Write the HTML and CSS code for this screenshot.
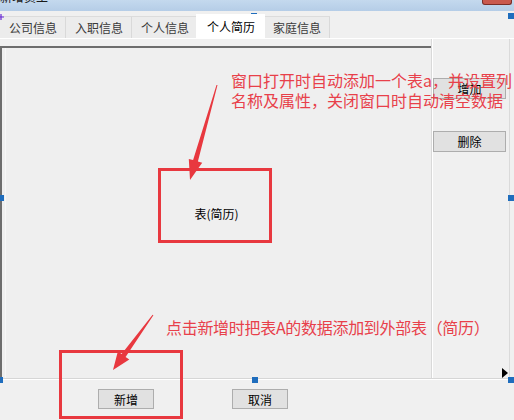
FILE: index.html
```html
<!DOCTYPE html>
<html lang="zh-CN">

<head>
    <meta charset="UTF-8">
    <title>新增员工</title>
    <link rel="stylesheet" href="styles.css">
</head>

<body>
    <div class="window">
        <div class="titlebar">
            <span class="title">新增员工</span>
            <span class="close"></span>
        </div>

        <div class="tabs">
            <div class="tab">公司信息</div>
            <div class="tab">入职信息</div>
            <div class="tab">个人信息</div>
            <div class="tab active">个人简历</div>
            <div class="tab">家庭信息</div>
        </div>

        <div class="panel">
            <div class="grid">
                <span class="grid-label">表(简历)</span>
            </div>
            <div class="side">
                <button class="btn side-btn">增加</button>
                <button class="btn side-btn">删除</button>
            </div>
        </div>

        <div class="footer">
            <button class="btn">新增</button>
            <button class="btn">取消</button>
        </div>

        <!-- designer marks -->
        <svg class="cross" width="6" height="8" viewBox="0 0 6 8">
            <path d="M0 4H5M2 1V7" stroke="#6a2bd6" stroke-width="1.2" fill="none" />
        </svg>
        <span class="handle h-top-mid"></span>
        <span class="handle h-top-right"></span>
        <span class="handle h-mid-left"></span>
        <span class="handle h-mid-right"></span>
        <span class="handle h-bot-left"></span>
        <span class="handle h-bot-mid"></span>
        <span class="handle h-bot-right"></span>
        <span class="pointer"></span>

        <!-- red annotations -->
        <div class="note note-top">窗口打开时自动添加一个表a，并设置列<br>名称及属性，关闭窗口时自动清空数据</div>
        <div class="note note-bottom">点击新增时把表A的数据添加到外部表（简历）</div>
        <div class="mark mark-grid"></div>
        <div class="mark mark-add"></div>
        <svg class="arrows" width="514" height="420" viewBox="0 0 514 420">
            <polygon fill="#e8383f"
                points="216.5,84.9 193.1,160.1 188.8,158.9 190,180 202.2,162.7 197.9,161.5 217.5,85.1" />
            <polygon fill="#e8383f"
                points="152.6,314.7 121.6,353.9 117.9,351.3 113,370 129.3,359.5 125.6,356.9 153.4,315.3" />
        </svg>
    </div>
</body>

</html>
```

FILE: styles.css
```css
* {
    box-sizing: border-box;
    margin: 0;
    padding: 0;
}

body {
    background: #f0f0f0;
    font-family: "Noto Sans CJK SC", "Liberation Sans", sans-serif;
    overflow: hidden;
}

.window {
    position: relative;
    width: 514px;
    height: 420px;
    overflow: hidden;
}

.titlebar {
    display: flex;
    height: 11px;
    background: linear-gradient(to bottom, #c4d9ee, #b5cde7);
    overflow: hidden;
}

.title {
    display: block;
    margin-top: -10px;
    font-size: 12px;
    line-height: 14px;
    color: #1a1a1a;
}

.close {
    display: block;
    width: 30px;
    height: 5px;
    margin-left: auto;
    margin-right: 2px;
    background: #c9594e;
    border: 1px solid #7a2e28;
    border-top: none;
    border-radius: 0 0 3px 3px;
}

/* tabs */

.tabs {
    display: flex;
    align-items: flex-end;
    margin-top: 3px;
    height: 24px;
}

.tab {
    height: 22px;
    padding: 0 8px 0 9px;
    border-right: 1px solid #d9d9d9;
    border-top: 1px solid #dcdcdc;
    background: #ececec;
    font-size: 12px;
    line-height: 21px;
    color: #3a3a3a;
}

.tab.active {
    height: 24px;
    margin: 0 -1px 0 -2px;
    padding: 0 10px 0 11px;
    background: #fff;
    border: none;
    color: #000;
    line-height: 25px;
    position: relative;
    z-index: 1;
}

/* tab page */

.panel {
    display: flex;
    height: 341px;
    border-top: 1px solid #fff;
    border-bottom: 1px solid #d6d6d6;
}

.grid {
    display: flex;
    align-items: center;
    justify-content: center;
    width: 431px;
    height: 332px;
    margin-top: 7px;
    border-top: 2px solid #6d6d6d;
    border-left: 2px solid #6d6d6d;
    background: linear-gradient(to right, transparent 3px, #f7f7f7 3px, #f7f7f7 4px, transparent 4px) #efefef;
}

.grid-label {
    font-size: 12px;
    color: #000;
}

.side {
    display: flex;
    flex-direction: column;
    width: 79px;
    border-left: 1px solid #d9d9d9;
    border-right: 1px solid #dadada;
    box-shadow: inset 1px 0 0 #fff;
}

.btn {
    width: 56px;
    height: 20px;
    background: #e1e1e1;
    border: 1px solid #adadad;
    font-family: inherit;
    font-size: 12px;
    line-height: 17px;
    color: #000;
}

.side-btn {
    width: 73px;
    height: 21px;
    margin-left: 1px;
    margin-top: 39px;
}

.side-btn + .side-btn {
    margin-top: 32px;
}

.footer {
    display: flex;
    gap: 78px;
    padding: 9px 0 0 98px;
    border-top: 1px solid #fff;
}

/* designer marks */

.cross {
    position: absolute;
    left: -1px;
    top: 13px;
}

.handle {
    position: absolute;
    width: 6px;
    height: 6px;
    background: #1f6dbd;
}

.h-top-mid { left: 251px; top: 13px; }
.h-top-right { left: 508px; top: 13px; }
.h-mid-left { left: -2px; top: 195px; }
.h-mid-right { left: 508px; top: 195px; }
.h-bot-left { left: -3px; top: 377px; }
.h-bot-mid { left: 252px; top: 377px; }
.h-bot-right { left: 508px; top: 377px; }

.pointer {
    position: absolute;
    left: 502px;
    top: 368px;
    border-left: 6px solid #000;
    border-top: 5px solid transparent;
    border-bottom: 5px solid transparent;
}

/* red annotations */

.note {
    position: absolute;
    font-size: 16px;
    line-height: 20px;
    color: #e8404a;
    white-space: nowrap;
    z-index: 2;
}

.note-top {
    left: 231px;
    top: 70px;
}

.note-bottom {
    left: 166px;
    top: 317px;
    letter-spacing: -0.3px;
}

.mark {
    position: absolute;
    border: 3px solid #e8383f;
    z-index: 2;
}

.mark-grid {
    left: 158px;
    top: 168px;
    width: 114px;
    height: 75px;
}

.mark-add {
    left: 59px;
    top: 350px;
    width: 124px;
    height: 69px;
}

.arrows {
    position: absolute;
    left: 0;
    top: 0;
    z-index: 2;
}
```
